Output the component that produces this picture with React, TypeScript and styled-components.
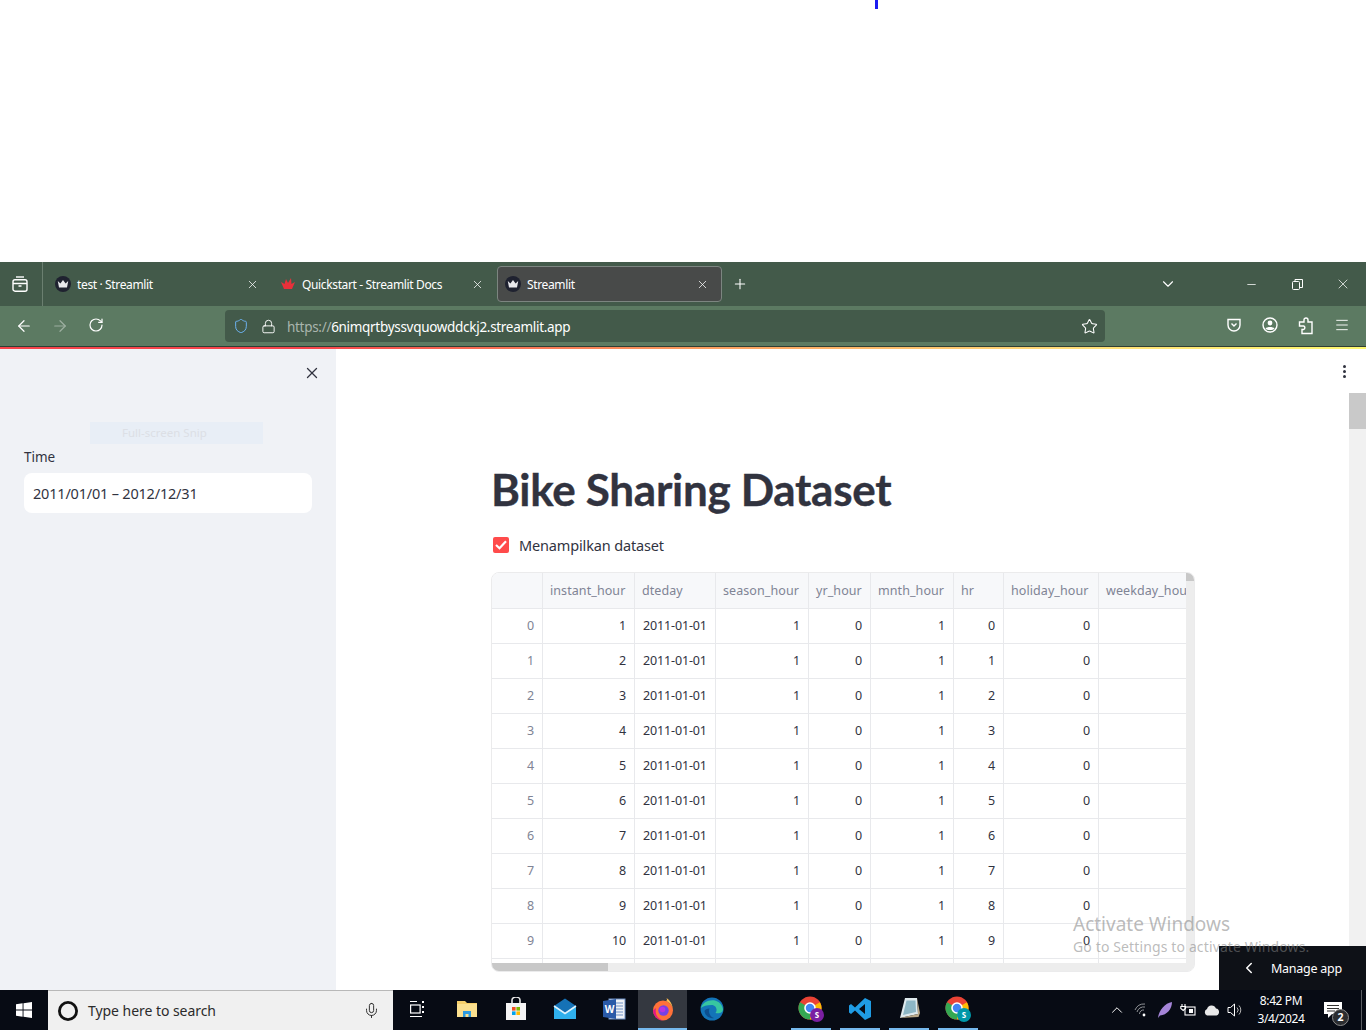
import React from 'react';
import styled, { createGlobalStyle } from 'styled-components';
import { Menu, Minus, Plus, RotateCw, ArrowLeft, ArrowRight, Star, Lock, Shield, X, ChevronDown, ChevronLeft, ChevronUp, Mic } from 'lucide-react';

const GlobalStyle = createGlobalStyle`
  html, body { margin: 0; padding: 0; background: #fff; }
  #root { width: 1366px; height: 1030px; overflow: hidden; }
`;

const Page = styled.div`
  position: relative;
  width: 1366px;
  height: 1030px;
  display: flex;
  flex-direction: column;
  font-family: "Noto Sans", "Open Sans", sans-serif;
  overflow: hidden;
`;

const Blank = styled.div`
  height: 262px;
  background: #fff;
  display: flex;
  padding-left: 875px;
`;

const BlueTick = styled.div`
  width: 3px;
  height: 9px;
  background: #1c1cf0;
`;

const TabBar = styled.div`
  height: 44px;
  background: #435a4a;
  display: flex;
  align-items: center;
  color: #fff;
`;

const ViewTabs = styled.div`
  width: 43px;
  height: 44px;
  margin-right: 4px;
  padding-right: 2px;
  box-sizing: border-box;
  border-right: 1px solid #6b7f70;
  display: flex;
  align-items: center;
  justify-content: center;
`;

const Tab = styled.div<{ $active?: boolean }>`
  width: 225px;
  height: 36px;
  margin-right: ${(p) => (p.$active ? '10px' : '0')};
  box-sizing: border-box;
  display: flex;
  align-items: center;
  padding: 0 12px 0 7px;
  gap: 6px;
  border-radius: 4px;
  background: ${(p) => (p.$active ? '#484a49' : 'transparent')};
  border: 1px solid ${(p) => (p.$active ? '#7c8580' : 'transparent')};
  font-size: 12px;
`;

const TabTitle = styled.span`
  flex: 1;
  letter-spacing: -0.36px;
  white-space: nowrap;
`;

const TabIconCircle = styled.span`
  width: 16px;
  height: 16px;
  border-radius: 50%;
  background: #1f2230;
  display: flex;
  align-items: center;
  justify-content: center;
`;

const Spacer = styled.div`
  flex: 1;
`;

const TitleButton = styled.div<{ $w: number }>`
  width: ${(p) => p.$w}px;
  display: flex;
  justify-content: center;
  align-items: center;
`;

const Toolbar = styled.div`
  height: 40px;
  background: #5c7a62;
  display: flex;
  align-items: center;
  color: #fff;
`;

const NavButton = styled.div<{ $dim?: boolean }>`
  width: 36px;
  display: flex;
  justify-content: center;
  opacity: ${(p) => (p.$dim ? 0.4 : 1)};
`;

const NavGroup = styled.div`
  width: 225px;
  padding-left: 6px;
  box-sizing: border-box;
  display: flex;
`;

const UrlBar = styled.div`
  width: 880px;
  height: 32px;
  background: #435a4a;
  border-radius: 4px;
  display: flex;
  align-items: center;
  padding: 0 7px 0 8px;
  box-sizing: border-box;
  gap: 12px;
  font-size: 13.5px;
`;

const UrlText = styled.div`
  flex: 1;
  margin-left: -1px;
  padding-top: 2px;
  letter-spacing: -0.3px;
  white-space: nowrap;
`;

const UrlScheme = styled.span`
  color: #a9b5ad;
`;

const ToolIcons = styled.div`
  flex: 1;
  display: flex;
  justify-content: flex-end;
  gap: 20px;
  padding-right: 16px;
`;

const Rainbow = styled.div`
  height: 2px;
  border-top: 1px solid #2f3f34;
  background: linear-gradient(90deg, #f6444b 0%, #f6444b 22%, #fb9a5e 50%, #ffdc78 78%, #fdf86f 100%);
`;

const Main = styled.div`
  flex: 1;
  display: flex;
  min-height: 0;
  background: #fff;
`;

const Sidebar = styled.aside`
  position: relative;
  width: 336px;
  background: #f0f2f6;
  padding: 15px 24px 0;
  box-sizing: border-box;
  color: #31333f;
`;

const SidebarClose = styled.div`
  display: flex;
  justify-content: flex-end;
  height: 84px;
  margin-right: -9px;
`;

const SnipGhost = styled.div`
  position: absolute;
  left: 90px;
  top: 73px;
  width: 173px;
  height: 22px;
  background: #e8eef6;
  color: #dcdfe5;
  font-size: 11.5px;
  line-height: 22px;
  padding-left: 32px;
  box-sizing: border-box;
`;

const FieldLabel = styled.div`
  font-size: 13.5px;
  line-height: 18px;
  margin-bottom: 7px;
`;

const DateInput = styled.div`
  height: 40px;
  width: 288px;
  background: #fff;
  border-radius: 8px;
  padding: 0 9px;
  box-sizing: border-box;
  display: flex;
  align-items: center;
  font-size: 14.5px;
  letter-spacing: -0.2px;
`;

const Content = styled.main`
  position: relative;
  flex: 1;
  min-width: 0;
  padding: 110px 0 0 155px;
  color: #31333f;
`;

const Kebab = styled.div`
  position: absolute;
  right: 20px;
  top: 16px;
  display: flex;
  flex-direction: column;
  gap: 2px;
`;

const KebabDot = styled.i`
  width: 3px;
  height: 3px;
  border-radius: 50%;
  background: #31333f;
`;

const PageTrack = styled.div`
  position: absolute;
  right: 0;
  top: 44px;
  bottom: 0;
  width: 17px;
  background: #f1f1f1;
`;

const PageThumb = styled.div`
  height: 36px;
  background: #c9c9c9;
`;

const Title = styled.h1`
  margin: 0;
  font-family: Lato, "Noto Sans", sans-serif;
  font-size: 44px;
  line-height: 60px;
  font-weight: 700;
  letter-spacing: -0.3px;
  white-space: nowrap;
  -webkit-text-stroke: 0.35px #31333f;
`;

const CheckRow = styled.div`
  display: flex;
  align-items: center;
  gap: 10px;
  margin: 15px 0 16px 2px;
  height: 22px;
  font-size: 14.5px;
  letter-spacing: -0.15px;
`;

const CheckBox = styled.div`
  width: 16px;
  height: 16px;
  border-radius: 2px;
  background: #ff4b4b;
  display: flex;
  align-items: center;
  justify-content: center;
`;

const TableFrame = styled.div`
  position: relative;
  width: 704px;
  height: 400px;
  box-sizing: border-box;
  border: 1px solid #ebebec;
  border-radius: 8px;
  overflow: hidden;
  background: #fff;
`;

const Grid = styled.div`
  display: grid;
  grid-template-columns: 51px 92px 81px 93px 62px 83px 50px 95px 120px;
  grid-template-rows: 36px;
  grid-auto-rows: 35px;
  width: 694px;
  height: 392px;
  overflow: hidden;
  font-size: 12.5px;
`;

const HeaderCell = styled.div`
  box-sizing: border-box;
  background: #f7f8fa;
  color: #808495;
  border-right: 1px solid #e8e9ec;
  border-bottom: 1px solid #e8e9ec;
  padding: 0 7px;
  display: flex;
  align-items: center;
  letter-spacing: 0.08px;
  white-space: nowrap;
  overflow: hidden;
`;

const Cell = styled.div<{ $index?: boolean; $left?: boolean }>`
  box-sizing: border-box;
  border-right: 1px solid #e8e9ec;
  border-bottom: 1px solid #e8e9ec;
  padding: 0 8px 1px;
  display: flex;
  align-items: center;
  justify-content: ${(p) => (p.$left ? 'flex-start' : 'flex-end')};
  background: #fff;
  color: ${(p) => (p.$index ? '#808495' : '#31333f')};
  letter-spacing: -0.15px;
`;

const VerticalBar = styled.div`
  position: absolute;
  top: 0;
  right: 0;
  bottom: 0;
  width: 8px;
  background: #ededed;
`;

const VerticalThumb = styled.div`
  height: 8px;
  background: #c8c8c8;
`;

const HorizontalBar = styled.div`
  position: absolute;
  left: 0;
  right: 0;
  bottom: 0;
  height: 8px;
  background: #ededed;
`;

const HorizontalThumb = styled.div`
  width: 116px;
  height: 8px;
  background: #c8c8c8;
`;

const Watermark = styled.div`
  position: absolute;
  left: 1073px;
  top: 913px;
  color: rgba(130, 130, 130, 0.55);
  white-space: nowrap;
`;

const WatermarkTitle = styled.div`
  font-size: 19px;
  line-height: 23px;
`;

const WatermarkSub = styled.div`
  font-size: 14px;
  line-height: 21px;
  letter-spacing: 0.13px;
`;

const ManageApp = styled.div`
  position: absolute;
  right: 0;
  top: 946px;
  width: 147px;
  height: 44px;
  background: #0e1117;
  color: #fff;
  display: flex;
  align-items: center;
  padding-left: 21px;
  box-sizing: border-box;
  gap: 13px;
  font-size: 12.5px;
  letter-spacing: -0.25px;
`;

const Taskbar = styled.div`
  height: 40px;
  background: #070b14;
  display: flex;
  align-items: center;
  color: #fff;
`;

const StartButton = styled.div`
  width: 48px;
  display: flex;
  justify-content: center;
`;

const SearchBox = styled.div`
  width: 345px;
  height: 40px;
  box-sizing: border-box;
  background: #f0f0f0;
  border-top: 1px solid #b8b8b8;
  color: #2b2b2b;
  display: flex;
  align-items: center;
  padding: 0 13px 0 9px;
  gap: 9px;
  font-size: 14px;
`;

const SearchText = styled.span`
  flex: 1;
  letter-spacing: -0.05px;
`;

const TaskIcon = styled.div<{ $active?: boolean; $open?: boolean }>`
  width: ${(p) => (p.$open ? '40px' : '49px')};
  margin: ${(p) => (p.$open ? '0 4.5px' : '0')};
  height: 40px;
  box-sizing: border-box;
  display: flex;
  align-items: center;
  justify-content: center;
  background: ${(p) => (p.$active ? '#343840' : 'transparent')};
  border-bottom: 2px solid ${(p) => (p.$active || p.$open ? '#76b9ed' : 'transparent')};
`;

const TaskGap = styled.div<{ $w: number }>`
  width: ${(p) => p.$w}px;
`;

const Tray = styled.div`
  flex: 1;
  display: flex;
  align-items: center;
  justify-content: flex-end;
  gap: 7px;
`;

const TrayChevron = styled(ChevronUp)`
  margin-right: 1px;
`;

const Clock = styled.div`
  width: 62px;
  margin-left: -1px;
  text-align: center;
  font-size: 12px;
  line-height: 18px;
  letter-spacing: -0.4px;
`;

const Notify = styled.div`
  position: relative;
  width: 42px;
  height: 40px;
  margin-left: -7px;
  display: flex;
  align-items: center;
  justify-content: center;
`;

const NotifyBadge = styled.span`
  position: absolute;
  left: 20px;
  top: 19px;
  width: 15px;
  height: 15px;
  border-radius: 50%;
  background: #2b2d30;
  border: 1px solid #8a8a8a;
  font-size: 10.5px;
  line-height: 15px;
  text-align: center;
  font-weight: 700;
`;

const ShowDesktop = styled.div`
  width: 4px;
  height: 40px;
  border-left: 1px solid #5a5d62;
`;

const Crown = ({ color = '#e8e8ec' }: { color?: string }) => (
  <svg width="12" height="10" viewBox="0 0 12 10">
    <path d="M0.8 2 L3.4 4.5 L6 1 L8.6 4.5 L11.2 2 L10 8.5 L2 8.5 Z" fill={color} />
  </svg>
);

const DocsLogo = () => (
  <svg width="16" height="12" viewBox="-1 0 16 12">
    <path d="M0 4 L3.5 6 L5 1 L7 5 L10 0 L10.5 6 L14 4 L11 11 L3 11 Z" fill="#e8303a" />
  </svg>
);

const FirefoxView = () => (
  <svg width="16" height="16" viewBox="0 0 16 16" fill="none" stroke="#fff" strokeWidth="1.4">
    <path d="M4 1 H12" />
    <rect x="1" y="3.7" width="14" height="11.5" rx="2" />
    <path d="M1 7.5 H15 M6.5 10 H9.5" />
  </svg>
);

const Pocket = () => (
  <svg width="16" height="16" viewBox="0 0 16 16" fill="none" stroke="#fff" strokeWidth="1.4">
    <path d="M2 2.5 H14 V8 A6 6 0 0 1 2 8 Z" />
    <path d="M5.5 6.5 L8 9 L10.5 6.5" />
  </svg>
);

const Account = () => (
  <svg width="16" height="16" viewBox="0 0 16 16">
    <circle cx="8" cy="8" r="7" fill="none" stroke="#fff" strokeWidth="1.4" />
    <circle cx="8" cy="6" r="2.4" fill="#fff" />
    <path d="M3.5 11.5 C5 9.5 11 9.5 12.5 11.5 C11 13.6 5 13.6 3.5 11.5 Z" fill="#fff" />
  </svg>
);

const Puzzle = () => (
  <svg width="16" height="18" viewBox="0 0 16 18" fill="none" stroke="#fff" strokeWidth="1.4">
    <path d="M1.5 5 H6 V3 A2 2 0 0 1 10 3 V5 H14 V16.5 H4 V12.5 H5.5 A1.8 1.8 0 0 0 5.5 9 H1.5 Z" />
  </svg>
);

const RestoreIcon = () => (
  <svg width="11" height="11" viewBox="0 0 11 11" fill="none" stroke="#fff">
    <rect x="0.5" y="2.5" width="7" height="8" rx="1" />
    <path d="M3 2.5 V0.5 H10.5 V8.5 H7.5" />
  </svg>
);

const WindowsLogo = () => (
  <svg width="16" height="16" viewBox="0 0 16 16" fill="#fff">
    <path d="M0 2.3 L6.6 1.3 V7.5 H0 Z M7.5 1.2 L16 0 V7.5 H7.5 Z M0 8.5 H6.6 V14.7 L0 13.7 Z M7.5 8.5 H16 V16 L7.5 14.8 Z" />
  </svg>
);

const TaskView = () => (
  <svg width="16" height="18" viewBox="0 0 16 18" fill="none" stroke="#fff" strokeWidth="1.2">
    <path d="M0 1.5 H7 M0 16.5 H12" />
    <rect x="0.6" y="5" width="9.5" height="8" />
    <path d="M13 1 V3 M13 6 V8 M13 11 V13" strokeWidth="2" />
  </svg>
);

const FolderIcon = () => (
  <svg width="22" height="20" viewBox="0 0 22 20">
    <path d="M1 2 H9 L11 4 H21 V18 H1 Z" fill="#f6cf6a" />
    <path d="M1 5 H21 V18 H1 Z" fill="#fbe08f" />
    <path d="M7 18 V12 H15 V18 H12.5 V15 H9.5 V18 Z" fill="#2e9be0" />
  </svg>
);

const StoreIcon = () => (
  <svg width="22" height="24" viewBox="0 0 22 24">
    <path d="M7 6 V3 A4 3 0 0 1 15 3 V6" fill="none" stroke="#e6e6e6" strokeWidth="1.6" />
    <rect x="1" y="6" width="20" height="17" fill="#f5f5f5" />
    <rect x="7" y="10" width="3.6" height="3.6" fill="#f25022" />
    <rect x="11.4" y="10" width="3.6" height="3.6" fill="#7fba00" />
    <rect x="7" y="14.4" width="3.6" height="3.6" fill="#00a4ef" />
    <rect x="11.4" y="14.4" width="3.6" height="3.6" fill="#ffb900" />
  </svg>
);

const MailIcon = () => (
  <svg width="24" height="22" viewBox="0 0 24 22">
    <path d="M1 8 L12 0.5 L23 8 V21 H1 Z" fill="#1572b6" />
    <path d="M1 8 L12 15.5 L23 8 V21 H1 Z" fill="#2fb0ec" />
    <path d="M1 8 L12 15.5 L23 8" fill="none" stroke="#dff3fc" strokeWidth="1.6" />
  </svg>
);

const WordIcon = () => (
  <svg width="24" height="22" viewBox="0 0 24 22">
    <rect x="7" y="1" width="16" height="20" fill="#eef1f6" stroke="#6d8fc4" />
    <path d="M14 5 H21 M14 8 H21 M14 11 H21 M14 14 H21 M14 17 H21" stroke="#6d8fc4" />
    <path d="M1 3 L14 1 V21 L1 19 Z" fill="#2a5aa8" />
    <text x="7.5" y="15" textAnchor="middle" fontSize="10" fontWeight="700" fill="#fff" fontFamily="Noto Sans, sans-serif">W</text>
  </svg>
);

const FirefoxIcon = () => (
  <svg width="24" height="24" viewBox="0 0 24 24">
    <circle cx="12" cy="13.5" r="10" fill="#ff7139" />
    <path d="M12 3.5 A10 10 0 0 1 22 13.5 C22 8 19 3 15.5 1 C16.5 3 16 4 14.5 4 Z" fill="#ffbd4f" />
    <path d="M2 13.5 A10 10 0 0 0 12 23.5 C7 22 3.5 18 5 11 Z" fill="#e31587" />
    <circle cx="12.5" cy="13.5" r="5.2" fill="#7542e5" />
    <circle cx="11.5" cy="12.5" r="2.8" fill="#b833e1" />
  </svg>
);

const EdgeIcon = () => (
  <svg width="24" height="24" viewBox="0 0 24 24">
    <circle cx="12" cy="12" r="11.5" fill="#1374b8" />
    <path d="M1 11 C3 2 20 -1 23 12 C23 16 19 17 15.5 16 C18 13 16 8 11.5 8 C7 8 3 9 1 11 Z" fill="#37c6a0" />
    <path d="M4.5 14 C5 19 10 22 14 21 C10 20 8 15 9.5 11.5 C7 11.5 5 12.5 4.5 14 Z" fill="#0c4f8f" />
  </svg>
);

const ChromeIcon = ({ badge, label }: { badge: string; label: string }) => (
  <svg width="28" height="28" viewBox="0 0 28 28">
    <circle cx="13" cy="13" r="11.5" fill="#ea4335" />
    <path d="M13 13 L3.04 7.25 A11.5 11.5 0 0 0 13 24.5 Z" fill="#34a853" />
    <path d="M13 13 L13 24.5 A11.5 11.5 0 0 0 22.96 7.25 Z" fill="#fbbc05" />
    <circle cx="13" cy="13" r="5" fill="#4285f4" stroke="#fff" strokeWidth="1.6" />
    <circle cx="20" cy="20" r="7" fill={badge} />
    <text x="20" y="23" textAnchor="middle" fontSize="8" fontWeight="700" fill="#fff" fontFamily="Noto Sans, sans-serif">{label}</text>
  </svg>
);

const VsCodeIcon = () => (
  <svg width="24" height="24" viewBox="0 0 24 24">
    <path d="M17 1 L23 4 V20 L17 23 L7 13.5 L3 17 L1 15.5 V8.5 L3 7 L7 10.5 Z M17 7 L11 12 L17 17 Z" fill="#1f9ce4" />
  </svg>
);

const NotepadIcon = () => (
  <svg width="24" height="24" viewBox="0 0 24 24">
    <path d="M8 1 H20 L21 17 L3 21 Z" fill="#dfeaee" />
    <path d="M9.5 3.5 H18.5 L19 15 L6 18 Z" fill="#8db7c6" />
    <path d="M20 1 L23 16 L21.5 20 L3 21 L21 17 Z" fill="#b9a98a" />
  </svg>
);

const SearchCircle = () => (
  <svg width="22" height="22" viewBox="0 0 22 22">
    <circle cx="11" cy="11" r="8.6" fill="none" stroke="#111" strokeWidth="2.8" />
  </svg>
);

const WifiIcon = () => (
  <svg width="16" height="16" viewBox="0 0 16 16" fill="none" stroke="#8f9296" strokeWidth="1">
    <path d="M1 8 A10 10 0 0 1 11 2 M3 10 A7 7 0 0 1 11 5 M5.5 12 A4 4 0 0 1 10 8" />
    <circle cx="10" cy="13" r="1.4" fill="#fff" stroke="none" />
  </svg>
);

const FeatherIcon = () => (
  <svg width="16" height="18" viewBox="0 0 16 18">
    <path d="M1 17 C2 9 8 2 15 1 C15 8 10 14 3 14.5 Z" fill="#a585d8" />
  </svg>
);

const BatteryIcon = () => (
  <svg width="16" height="14" viewBox="0 0 16 14" fill="none" stroke="#fff" strokeWidth="1.1">
    <rect x="5" y="4" width="10" height="8" />
    <rect x="9" y="6" width="4" height="4" fill="#fff" stroke="none" />
    <path d="M2 1 V3 M5 1 V3 M0.8 3.5 H5.5 V5.5 L3.2 7.5 L0.8 5.5 Z" />
  </svg>
);

const CloudIcon = () => (
  <svg width="17" height="12" viewBox="0 0 17 12">
    <path d="M4 11.5 A3.5 3.5 0 0 1 4 5 A4.8 4.8 0 0 1 13 4.5 A3.6 3.6 0 0 1 13.5 11.5 Z" fill="#e8e8e8" />
  </svg>
);

const SpeakerIcon = () => (
  <svg width="17" height="16" viewBox="0 0 17 16" fill="none" stroke="#fff">
    <path d="M1 5.5 H3.5 L7.5 2 V14 L3.5 10.5 H1 Z" />
    <path d="M10 5.5 A3.5 3.5 0 0 1 10 10.5 M12 3.5 A6.5 6.5 0 0 1 12 12.5" stroke="#b5b5b5" />
  </svg>
);

const NotifyGlyph = () => (
  <svg width="18" height="16" viewBox="0 0 18 16" fill="#fff">
    <path d="M0 0 H18 V12 H8 L4 16 V12 H0 Z" />
    <path d="M3 3.5 H15 M3 6.5 H15 M3 9 H11" stroke="#333" strokeWidth="1" />
  </svg>
);

const CheckMark = () => (
  <svg width="12" height="10" viewBox="0 0 12 10" fill="none" stroke="#fff" strokeWidth="2.2">
    <path d="M1 5 L4.5 8.2 L11 1.2" />
  </svg>
);

const headers = ['', 'instant_hour', 'dteday', 'season_hour', 'yr_hour', 'mnth_hour', 'hr', 'holiday_hour', 'weekday_hour'];
const rowCount = 10;

export default function App() {
  return (
    <Page>
      <GlobalStyle />
      <Blank>
        <BlueTick />
      </Blank>

      <TabBar>
        <ViewTabs>
          <FirefoxView />
        </ViewTabs>
        <Tab>
          <TabIconCircle><Crown /></TabIconCircle>
          <TabTitle>test · Streamlit</TabTitle>
          <X size={13} strokeWidth={1.4} />
        </Tab>
        <Tab>
          <DocsLogo />
          <TabTitle>Quickstart - Streamlit Docs</TabTitle>
          <X size={13} strokeWidth={1.4} />
        </Tab>
        <Tab $active>
          <TabIconCircle><Crown /></TabIconCircle>
          <TabTitle>Streamlit</TabTitle>
          <X size={13} strokeWidth={1.4} />
        </Tab>
        <Plus size={16} strokeWidth={1.6} />
        <Spacer />
        <TitleButton $w={46}><ChevronDown size={18} strokeWidth={1.5} /></TitleButton>
        <TitleButton $w={37} />
        <TitleButton $w={46}><Minus size={13} strokeWidth={1.4} /></TitleButton>
        <TitleButton $w={46}><RestoreIcon /></TitleButton>
        <TitleButton $w={46}><X size={16} strokeWidth={1.1} /></TitleButton>
      </TabBar>

      <Toolbar>
        <NavGroup>
          <NavButton><ArrowLeft size={18} strokeWidth={1.6} /></NavButton>
          <NavButton $dim><ArrowRight size={18} strokeWidth={1.6} /></NavButton>
          <NavButton><RotateCw size={16} strokeWidth={1.8} /></NavButton>
        </NavGroup>
        <UrlBar>
          <Shield size={16} strokeWidth={1.5} color="#6db3f2" />
          <Lock size={15} strokeWidth={1.5} />
          <UrlText><UrlScheme>https://</UrlScheme>6nimqrtbyssvquowddckj2.streamlit.app</UrlText>
          <Star size={17} strokeWidth={1.5} />
        </UrlBar>
        <ToolIcons>
          <Pocket />
          <Account />
          <Puzzle />
          <Menu size={16} strokeWidth={1.4} />
        </ToolIcons>
      </Toolbar>

      <Rainbow />

      <Main>
        <Sidebar>
          <SidebarClose>
            <X size={18} strokeWidth={1.7} color="#31333f" />
          </SidebarClose>
          <SnipGhost>Full-screen Snip</SnipGhost>
          <FieldLabel>Time</FieldLabel>
          <DateInput>2011/01/01 – 2012/12/31</DateInput>
        </Sidebar>

        <Content>
          <Kebab>
            <KebabDot />
            <KebabDot />
            <KebabDot />
          </Kebab>
          <PageTrack>
            <PageThumb />
          </PageTrack>
          <Title>Bike Sharing Dataset</Title>
          <CheckRow>
            <CheckBox><CheckMark /></CheckBox>
            Menampilkan dataset
          </CheckRow>
          <TableFrame>
            <Grid>
              {headers.map((h) => (
                <HeaderCell key={h || 'index'}>{h}</HeaderCell>
              ))}
              {Array.from({ length: rowCount }, (_, i) => (
                <React.Fragment key={i}>
                  <Cell $index>{i}</Cell>
                  <Cell>{i + 1}</Cell>
                  <Cell $left>2011-01-01</Cell>
                  <Cell>1</Cell>
                  <Cell>0</Cell>
                  <Cell>1</Cell>
                  <Cell>{i}</Cell>
                  <Cell>0</Cell>
                  <Cell />
                </React.Fragment>
              ))}
              {headers.map((h) => (
                <Cell key={`next-${h}`} />
              ))}
            </Grid>
            <VerticalBar><VerticalThumb /></VerticalBar>
            <HorizontalBar><HorizontalThumb /></HorizontalBar>
          </TableFrame>
        </Content>
      </Main>

      <Taskbar>
        <StartButton><WindowsLogo /></StartButton>
        <SearchBox>
          <SearchCircle />
          <SearchText>Type here to search</SearchText>
          <Mic size={17} strokeWidth={1.3} color="#222" />
        </SearchBox>
        <TaskIcon><TaskView /></TaskIcon>
        <TaskIcon><FolderIcon /></TaskIcon>
        <TaskIcon><StoreIcon /></TaskIcon>
        <TaskIcon><MailIcon /></TaskIcon>
        <TaskIcon><WordIcon /></TaskIcon>
        <TaskIcon $active><FirefoxIcon /></TaskIcon>
        <TaskIcon><EdgeIcon /></TaskIcon>
        <TaskGap $w={50} />
        <TaskIcon $open><ChromeIcon badge="#7b1fa2" label="S" /></TaskIcon>
        <TaskIcon $open><VsCodeIcon /></TaskIcon>
        <TaskIcon $open><NotepadIcon /></TaskIcon>
        <TaskIcon $open><ChromeIcon badge="#0097a7" label="S" /></TaskIcon>
        <Tray>
          <TrayChevron size={18} strokeWidth={1.3} />
          <WifiIcon />
          <FeatherIcon />
          <BatteryIcon />
          <CloudIcon />
          <SpeakerIcon />
          <Clock>8:42 PM<br />3/4/2024</Clock>
          <Notify>
            <NotifyGlyph />
            <NotifyBadge>2</NotifyBadge>
          </Notify>
          <ShowDesktop />
        </Tray>
      </Taskbar>

      <ManageApp>
        <ChevronLeft size={18} strokeWidth={2} />
        Manage app
      </ManageApp>
      <Watermark>
        <WatermarkTitle>Activate Windows</WatermarkTitle>
        <WatermarkSub>Go to Settings to activate Windows.</WatermarkSub>
      </Watermark>
    </Page>
  );
}
